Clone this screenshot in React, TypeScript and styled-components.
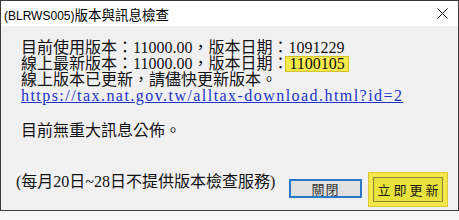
import styled, { createGlobalStyle } from "styled-components";

const GlobalStyle = createGlobalStyle`
  html, body {
    margin: 0;
    padding: 0;
    background: #f7f7f7;
  }
  * {
    box-sizing: border-box;
  }
`;

const Window = styled.div`
  width: 459px;
  height: 211px;
  border: 1px solid #3c3c3c;
  display: flex;
  flex-direction: column;
  background: #f0f0f0;
`;

const TitleBar = styled.div`
  height: 25px;
  flex: none;
  background: #ffffff;
  display: flex;
  align-items: center;
  justify-content: space-between;
  padding-left: 3px;
`;

const Title = styled.div`
  font-family: "Liberation Sans", "Noto Sans CJK TC", sans-serif;
  font-size: 12px;
  color: #000;
  white-space: nowrap;
  span {
    font-family: "Noto Sans CJK TC", sans-serif;
    font-size: 13.5px;
  }
`;

const CloseBox = styled.div`
  width: 31px;
  height: 25px;
  display: flex;
  align-items: center;
  justify-content: center;
`;

const Body = styled.div`
  flex: 1;
  display: flex;
  flex-direction: column;
  padding: 14px 10px 0 15px;
  font-family: "Liberation Serif", "Noto Sans CJK TC", serif;
  font-size: 16px;
  line-height: 16px;
  color: #111;
`;

const Info = styled.div`
  padding-left: 5px;
  display: flex;
  flex-direction: column;
`;

const Line = styled.div`
  height: 16px;
  white-space: nowrap;
`;

const Mark = styled.span`
  display: inline-block;
  height: 16px;
  line-height: 14px;
  margin-left: -3px;
  padding: 0 3px;
  border: 1px solid #d2c22a;
  background: #f6e94c;
  vertical-align: top;
`;

const UrlLink = styled.a`
  display: block;
  height: 16px;
  color: #2034c8;
  text-decoration: underline;
  letter-spacing: 1.45px;
  white-space: nowrap;
`;

const Message = styled(Line)`
  margin-top: 19px;
`;

const Footer = styled.div`
  margin-top: 33px;
  display: flex;
  align-items: flex-start;
`;

const Note = styled.div`
  flex: 1;
  margin-top: 2px;
  white-space: nowrap;
`;

const CloseButton = styled.button`
  width: 73px;
  height: 19px;
  margin-top: 7px;
  margin-right: 6px;
  padding: 0;
  border: 2px solid #2a78c6;
  background: #e1e1e1;
  font-family: "Noto Sans CJK TC", serif;
  font-size: 13px;
  line-height: 15px;
  letter-spacing: 1px;
  color: #333;
`;

const Highlight = styled.div`
  width: 80px;
  height: 35px;
  border: 1px solid #d9ca33;
  background: #f3e84a;
  padding: 4px;
`;

const UpdateButton = styled.button`
  width: 100%;
  height: 100%;
  padding: 0 0 0 3px;
  border: 1px solid #8c8634;
  background: #e8e23e;
  font-family: "Noto Sans CJK TC", serif;
  font-size: 13px;
  letter-spacing: 3px;
  white-space: nowrap;
  color: #1a1a10;
`;

export default function App() {
  return (
    <>
      <GlobalStyle />
      <Window>
        <TitleBar>
          <Title>
            (BLRWS005)<span>版本與訊息檢查</span>
          </Title>
          <CloseBox>
            <svg width="11" height="11" viewBox="0 0 11 11">
              <path d="M0.5 0.5 L10.5 10.5 M10.5 0.5 L0.5 10.5" stroke="#111" strokeWidth="1" />
            </svg>
          </CloseBox>
        </TitleBar>
        <Body>
          <Info>
            <Line>目前使用版本：11000.00，版本日期：1091229</Line>
            <Line>
              線上最新版本：11000.00，版本日期：<Mark>1100105</Mark>
            </Line>
            <Line>線上版本已更新，請儘快更新版本。</Line>
            <UrlLink href="#">https://tax.nat.gov.tw/alltax-download.html?id=2</UrlLink>
            <Message>目前無重大訊息公佈。</Message>
          </Info>
          <Footer>
            <Note>(每月20日~28日不提供版本檢查服務)</Note>
            <CloseButton>關閉</CloseButton>
            <Highlight>
              <UpdateButton>立即更新</UpdateButton>
            </Highlight>
          </Footer>
        </Body>
      </Window>
    </>
  );
}
